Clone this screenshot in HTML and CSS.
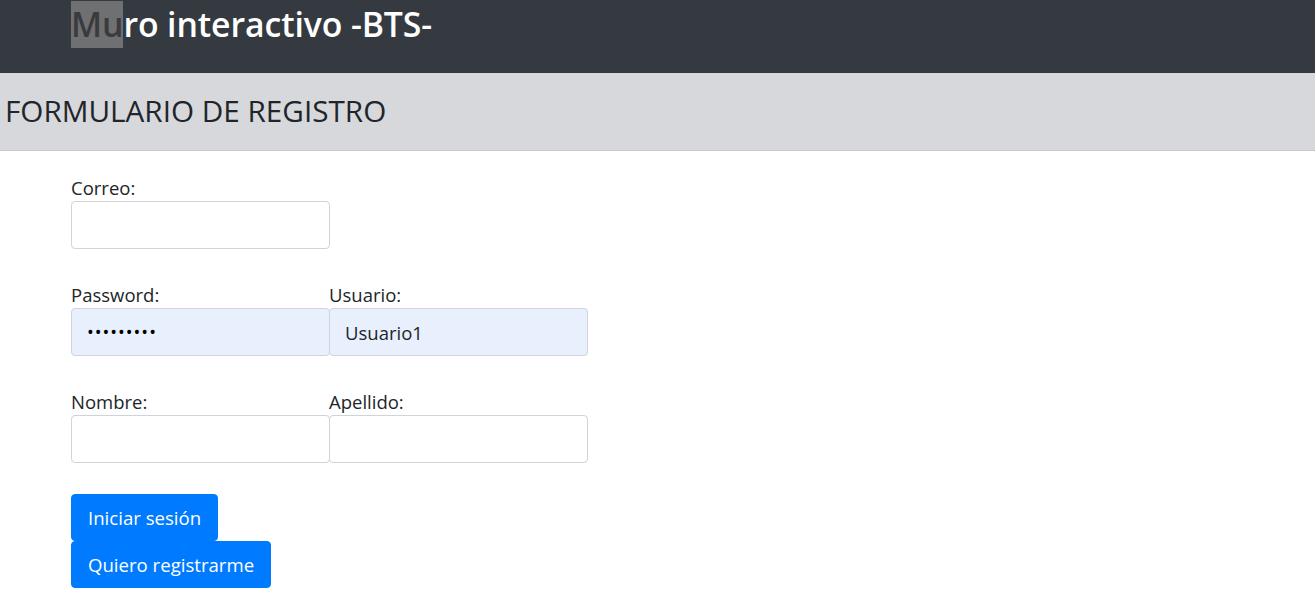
FILE: index.html
```html
<!DOCTYPE html>
<html lang="es">
<head>
<meta charset="utf-8">
<title>Muro interactivo -BTS-</title>
<link rel="stylesheet" href="styles.css">
</head>
<body>
<header class="navbar">
  <h1 class="brand"><span class="sel">Mu</span>ro interactivo -BTS-</h1>
</header>
<section class="banner">
  <h2 class="banner-title">FORMULARIO DE REGISTRO</h2>
</section>
<main class="form">
  <div class="row">
    <div class="field">
      <label>Correo:</label>
      <div class="input"></div>
    </div>
  </div>
  <div class="row">
    <div class="field">
      <label>Password:</label>
      <div class="input autofill"><span class="dots">•••••••••</span></div>
    </div>
    <div class="field">
      <label>Usuario:</label>
      <div class="input autofill">Usuario1</div>
    </div>
  </div>
  <div class="row last">
    <div class="field">
      <label>Nombre:</label>
      <div class="input"></div>
    </div>
    <div class="field">
      <label>Apellido:</label>
      <div class="input"></div>
    </div>
  </div>
  <div class="buttons">
    <button class="btn">Iniciar sesión</button>
    <button class="btn">Quiero registrarme</button>
  </div>
</main>
</body>
</html>
```
FILE: styles.css
```css
* { box-sizing: border-box; }
html, body { margin: 0; padding: 0; }
body {
  font-family: "Open Sans", "Noto Sans", sans-serif;
  color: #212529;
  background: #fff;
}
.navbar {
  background: #343a40;
  height: 73px;
  padding: 1px 0 0 71px;
}
.brand {
  margin: 0;
  font-size: 33.8px;
  font-weight: 600;
  color: #fff;
  line-height: 47px;
  letter-spacing: -0.1px;
}
.sel {
  background: #6f7071;
  color: #3a3b3d;
  display: inline-block;
}
.banner {
  background: #d6d8db;
  height: 78px;
  border-bottom: 1px solid #c6c8ca;
  display: flex;
  align-items: center;
  padding-left: 5px;
  padding-bottom: 2px;
}
.banner-title {
  margin: 0;
  font-size: 29.7px;
  font-weight: 400;
  color: #212529;
}
.form {
  padding: 23px 0 0 71px;
}
.row {
  display: flex;
  margin-bottom: 32px;
}
.row.last {
  margin-bottom: 31px;
}
.field {
  width: 258px;
  display: flex;
  flex-direction: column;
}
label {
  font-size: 18.5px;
  line-height: 27px;
  color: #212529;
}
.input {
  width: 259px;
  height: 48px;
  border: 1px solid #ced4da;
  border-radius: 4px;
  background: #fff;
  font-size: 18.5px;
  display: flex;
  align-items: center;
  padding: 0 15px;
  color: #212529;
}
.autofill {
  background: #e8f0fe;
}
.dots {
  font-size: 18px;
  letter-spacing: 1px;
  color: #000;
}
.buttons {
  display: flex;
  flex-direction: column;
  align-items: flex-start;
}
.btn {
  font-family: inherit;
  background: #007bff;
  color: #fff;
  border: 1px solid #007bff;
  border-radius: 4px;
  font-size: 18.6px;
  height: 47px;
  padding: 0 16px;
  cursor: pointer;
}
```
